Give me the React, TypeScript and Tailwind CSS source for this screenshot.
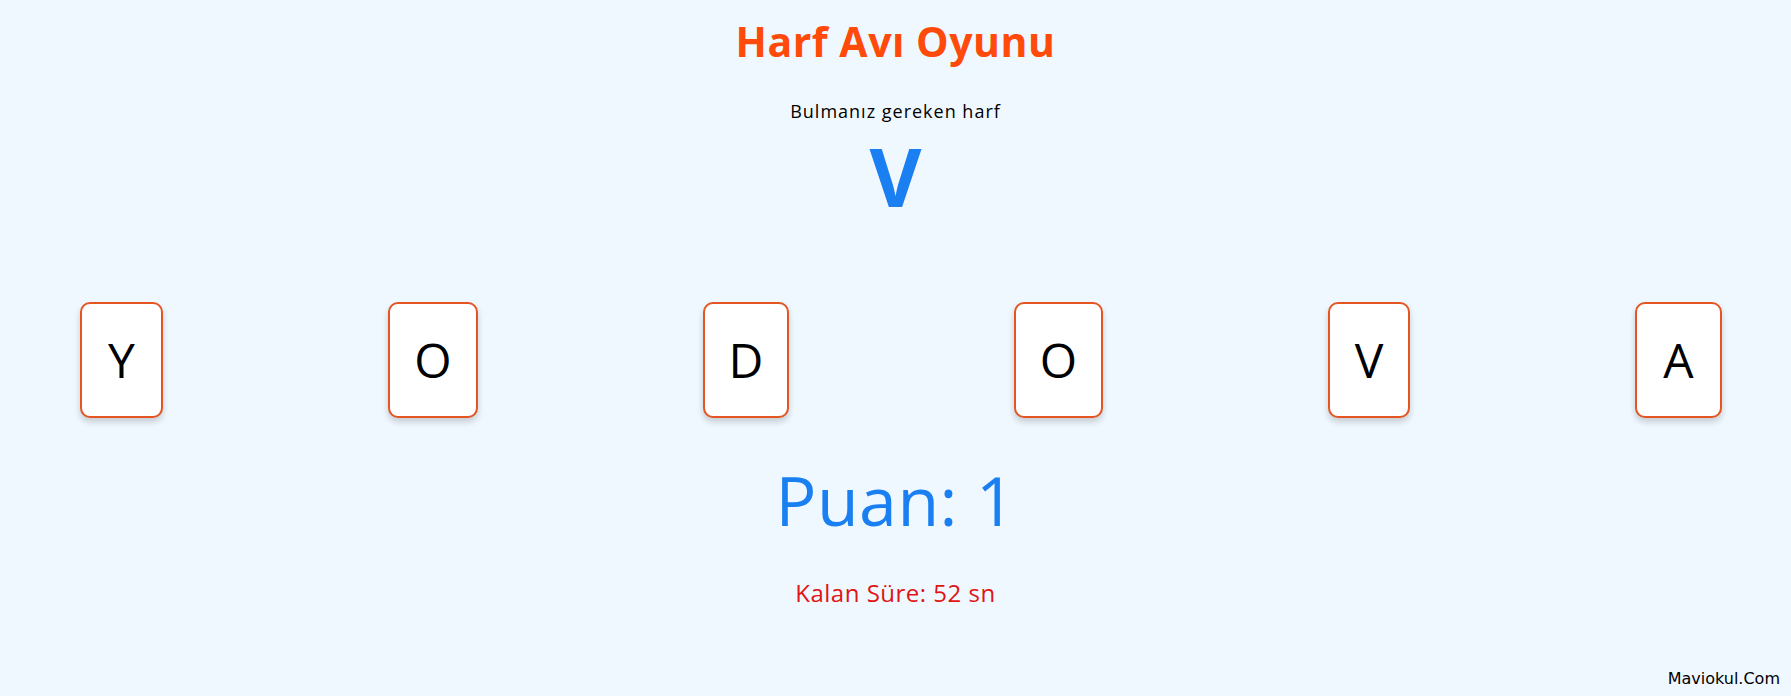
import React from "react";

const cards = [
  { ch: "Y", w: "w-[83px]" },
  { ch: "O", w: "w-[90px]" },
  { ch: "D", w: "w-[86px]" },
  { ch: "O", w: "w-[89px]" },
  { ch: "V", w: "w-[82px]" },
  { ch: "A", w: "w-[87px]" },
];

export default function App() {
  return (
    <div className="relative h-[696px] w-full overflow-hidden bg-[#f0f8ff] font-['Open_Sans',sans-serif]">
      <div className="flex flex-col items-center">
        <h1 className="mt-[21px] text-[41px] font-bold leading-none tracking-[0.5px] text-[#ff4a0a]">
          Harf Avı Oyunu
        </h1>
        <p className="mt-[40px] text-[18px] leading-none tracking-[1px] text-black">
          Bulmanız gereken harf
        </p>
        <div className="mt-[16px] text-[80px] font-bold leading-none text-[#1a80f2]">V</div>
      </div>

      <div className="mt-[86px] flex justify-between pl-[80px] pr-[69px]">
        {cards.map((c, i) => (
          <div
            key={i}
            className={`${c.w} flex h-[116px] items-center justify-center rounded-[10px] border-2 border-[#e45522] bg-white text-[48px] leading-none text-black shadow-[0_4px_6px_rgba(0,0,0,0.18)]`}
          >
            {c.ch}
          </div>
        ))}
      </div>

      <div className="flex flex-col items-center">
        <div className="mt-[48px] text-[68px] leading-none tracking-[0.5px] text-[#1a80f2]">Puan: 1</div>
        <div className="mt-[47px] text-[24px] leading-none tracking-[0.5px] text-[#e01414]">
          Kalan Süre: 52 sn
        </div>
      </div>

      <div className="absolute right-[11px] top-[671px] font-['DejaVu_Sans',sans-serif] text-[16px] leading-none text-black">
        Maviokul.Com
      </div>
    </div>
  );
}
